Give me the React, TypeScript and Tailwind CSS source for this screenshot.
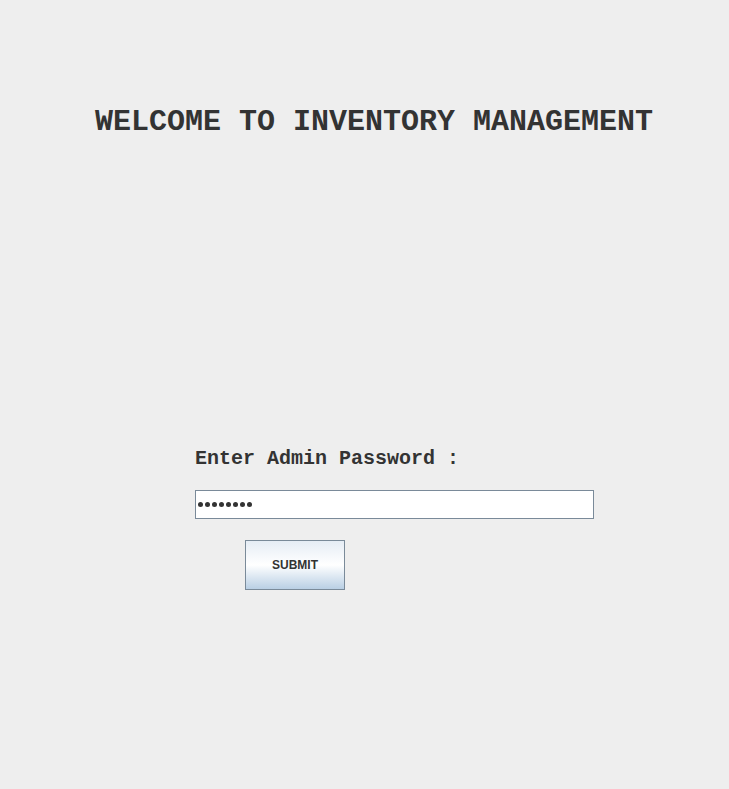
export default function App() {
  return (
    <div className="w-[729px] h-[789px] bg-[#eeeeee] flex flex-col font-['Liberation_Mono',monospace] text-[#333333]">
      {/* Title */}
      <div className="pt-[106px] pl-[95px] text-[30px] leading-[32px] font-bold whitespace-nowrap">
        WELCOME TO INVENTORY MANAGEMENT
      </div>

      {/* Login form */}
      <div className="mt-[309px] pl-[195px] flex flex-col">
        <div className="text-[20px] leading-[24px] font-bold whitespace-nowrap">Enter Admin Password :</div>
        <div className="mt-[19px] w-[399px] h-[29px] border border-[#7a8a99] bg-white flex items-center gap-[2px] pl-[2px]">
          {[0, 1, 2, 3, 4, 5, 6, 7].map((i) => (
            <span key={i} className="w-[5px] h-[5px] rounded-full bg-[#333333]" />
          ))}
        </div>
        <button className="mt-[21px] ml-[50px] w-[100px] h-[50px] border border-[#7a8a99] bg-gradient-to-b from-[#e6edf5] via-white to-[#b9cfe4] flex items-center justify-center font-['Liberation_Sans',sans-serif] text-[12px] font-bold text-[#333333]">
          SUBMIT
        </button>
      </div>
    </div>
  );
}
